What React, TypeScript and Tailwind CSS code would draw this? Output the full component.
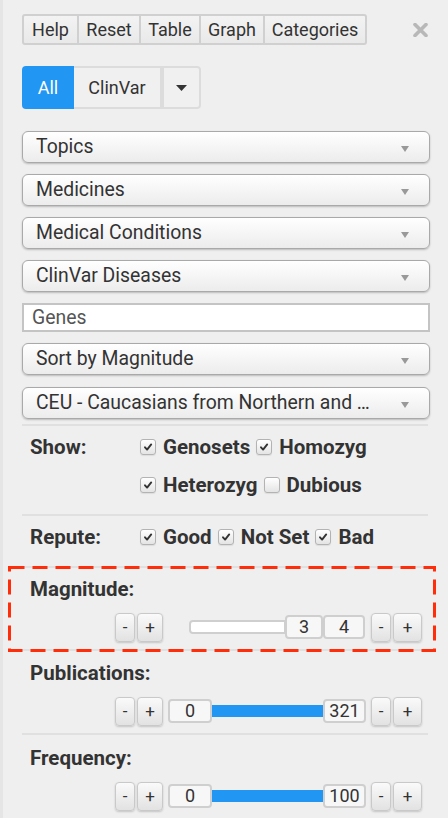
import React from "react";

const Check = ({ checked }: { checked: boolean }) => (
  <span className="inline-flex w-[16px] h-[16px] shrink-0 items-center justify-center rounded-[3px] border border-[#b3b3b3] bg-linear-to-b from-white to-[#e4e4e4] shadow-[0_1px_1px_rgba(0,0,0,0.08)]">
    {checked && (
      <svg width="10" height="10" viewBox="0 0 10 10">
        <path d="M2 5.3 L4.1 7.6 L8.2 2.4" stroke="#333" strokeWidth="1.9" fill="none" strokeLinecap="round" strokeLinejoin="round" />
      </svg>
    )}
  </span>
);

const CheckItem = ({ label, checked }: { label: string; checked: boolean }) => (
  <span className="inline-flex items-center mr-[6px]">
    <Check checked={checked} />
    <span className="ml-[7px] text-[20.5px] font-bold text-[#333]">{label}</span>
  </span>
);

const Select = ({ label }: { label: string }) => (
  <div className="h-[32px] flex items-center justify-between rounded-[6px] border border-[#a9a9a9] bg-linear-to-b from-white to-[#ececec] shadow-[0_1px_2px_rgba(0,0,0,0.22)] pl-[13px] pr-[20px]">
    <span className="text-[19.4px] text-[#333] leading-none">{label}</span>
    <svg width="8" height="6" viewBox="0 0 8 6" className="mt-[3px]">
      <path d="M0 0 L8 0 L4 6 Z" fill="#999" />
    </svg>
  </div>
);

const PM = ({ t, w }: { t: string; w: string }) => (
  <div
    className={`${w} h-[29px] flex items-center justify-center rounded-[4px] border border-[#c9c9c9] bg-linear-to-b from-[#fafafa] to-[#e2e2e2] shadow-[0_1px_2px_rgba(0,0,0,0.18)] text-[17px] text-[#333] leading-none`}
  >
    {t}
  </div>
);

const ValBox = ({ v, w }: { v: string; w: string }) => (
  <div className={`${w} h-[24px] flex items-center justify-center rounded-[4px] border-2 border-[#cfcfcf] bg-[#f7f7f7] text-[18px] text-[#333] leading-none relative z-10`}>
    {v}
  </div>
);

const Hr = () => <div className="h-[2px] bg-[#e0e0e0] mr-[2px]" />;

const Label = ({ t }: { t: string }) => (
  <div className="h-[38px] pl-[8px] flex items-center text-[20.5px] font-bold">{t}</div>
);

const RangeRow = ({ lo, hi }: { lo: string; hi: string }) => (
  <div className="h-[38px] flex items-center pl-[93px]">
    <PM t="-" w="w-[20px]" />
    <div className="w-[2px]" />
    <PM t="+" w="w-[26px]" />
    <div className="w-[5px]" />
    <div className="w-[198px] flex items-center">
      <ValBox v={lo} w="w-[44px]" />
      <div className="flex-1 h-[12px] bg-[#2196f3] -mx-[1px]" />
      <ValBox v={hi} w="w-[43px]" />
    </div>
    <div className="w-[5px]" />
    <PM t="-" w="w-[20px]" />
    <div className="w-[2px]" />
    <PM t="+" w="w-[29px]" />
  </div>
);

export default function App() {
  return (
    <div className="w-[448px] h-[818px] overflow-hidden bg-[#efefef] border-l-[3px] border-[#e5e5e5] font-['Roboto',sans-serif] text-[#333]">
      <div className="pl-[19px] pr-[18px] pt-[14px]">
        {/* top row */}
        <div className="flex items-center justify-between">
          <div className="flex h-[31px] rounded-[3px] border-2 border-[#d0d0d0] bg-linear-to-b from-[#f3f3f3] to-[#e9e9e9] text-[18px] text-[#333]">
            <div className="w-[53px] flex items-center justify-center">Help</div>
            <div className="w-[62px] flex items-center justify-center border-l-2 border-[#d0d0d0]">Reset</div>
            <div className="w-[60px] flex items-center justify-center border-l-2 border-[#d0d0d0]">Table</div>
            <div className="w-[64px] flex items-center justify-center border-l-2 border-[#d0d0d0]">Graph</div>
            <div className="w-[102px] flex items-center justify-center border-l-2 border-[#d0d0d0]">Categories</div>
          </div>
          <svg width="15" height="14" viewBox="0 0 15 14" className="mr-[2px]">
            <path d="M2 1.5 L13 12.5 M13 1.5 L2 12.5" stroke="#b8b8b8" strokeWidth="3.6" strokeLinecap="round" />
          </svg>
        </div>

        {/* All / ClinVar */}
        <div className="mt-[21px] flex h-[43px] text-[18px]">
          <div className="w-[52px] flex items-center justify-center bg-[#2196f3] text-white rounded-l-[4px]">All</div>
          <div className="w-[90px] flex items-center justify-center bg-[#f0f0f0] border-y-2 border-r-[4px] border-[#dcdcdc] text-[#333]">ClinVar</div>
          <div className="w-[37px] flex items-center justify-center bg-[#f0f0f0] border-y-2 border-r-2 border-[#dcdcdc] rounded-r-[4px]">
            <svg width="11" height="6" viewBox="0 0 11 6">
              <path d="M0 0 L11 0 L5.5 6 Z" fill="#333" />
            </svg>
          </div>
        </div>

        {/* selects */}
        <div className="mt-[22px] flex flex-col gap-[11px]">
          <Select label="Topics" />
          <Select label="Medicines" />
          <Select label="Medical Conditions" />
          <Select label="ClinVar Diseases" />
          <div className="h-[29px] flex items-center border-2 border-[#c4c4c4] bg-white pl-[8px]">
            <span className="text-[19.4px] text-[#555] leading-none">Genes</span>
          </div>
          <Select label="Sort by Magnitude" />
          <div className="mt-[1px]">
            <Select label="CEU - Caucasians from Northern and …" />
          </div>
        </div>

        <div className="mt-[5px]">
          <Hr />
          {/* Show */}
          <div className="pt-[2px] pb-[10px] flex">
            <div className="w-[118px] pl-[8px] h-[38px] flex items-center text-[20.5px] font-bold">Show:</div>
            <div className="flex flex-col">
              <div className="h-[38px] flex items-center">
                <CheckItem label="Genosets" checked />
                <CheckItem label="Homozyg" checked />
              </div>
              <div className="h-[38px] flex items-center">
                <CheckItem label="Heterozyg" checked />
                <CheckItem label="Dubious" checked={false} />
              </div>
            </div>
          </div>
          <Hr />
          {/* Repute */}
          <div className="pt-[2px] pb-[10px] flex">
            <div className="w-[118px] pl-[8px] h-[38px] flex items-center text-[20.5px] font-bold">Repute:</div>
            <div className="h-[38px] flex items-center">
              <CheckItem label="Good" checked />
              <CheckItem label="Not Set" checked />
              <CheckItem label="Bad" checked />
            </div>
          </div>

          {/* Magnitude with annotation */}
          <div className="relative">
            <Hr />
            <div className="pt-[2px] pb-[3px]">
              <Label t="Magnitude:" />
              <div className="h-[38px] flex items-center pl-[93px]">
                <PM t="-" w="w-[20px]" />
                <div className="w-[2px]" />
                <PM t="+" w="w-[26px]" />
                <div className="w-[5px]" />
                <div className="w-[198px] flex items-center">
                  <div className="ml-[21px] w-[97px] h-[14px] bg-white border-2 border-[#cfcfcf] rounded-l-[4px] -mr-[1px]" />
                  <ValBox v="3" w="w-[38px]" />
                  <ValBox v="4" w="w-[42px]" />
                </div>
                <div className="w-[5px]" />
                <PM t="-" w="w-[20px]" />
                <div className="w-[2px]" />
                <PM t="+" w="w-[29px]" />
              </div>
            </div>
            <Hr />
            <svg
              className="absolute left-[-14px] top-[0px] pointer-events-none z-20"
              width="428"
              height="86"
              viewBox="0 0 428 86"
            >
              <rect x="1.5" y="1.5" width="425" height="83" fill="none" stroke="#ff2d0a" strokeWidth="3" strokeDasharray="15 8" />
            </svg>
          </div>

          {/* Publications */}
          <div className="pt-[3px] pb-[3px]">
            <Label t="Publications:" />
            <RangeRow lo="0" hi="321" />
          </div>
          <Hr />
          {/* Frequency */}
          <div className="pt-[4px]">
            <Label t="Frequency:" />
            <RangeRow lo="0" hi="100" />
          </div>
        </div>
      </div>
    </div>
  );
}
